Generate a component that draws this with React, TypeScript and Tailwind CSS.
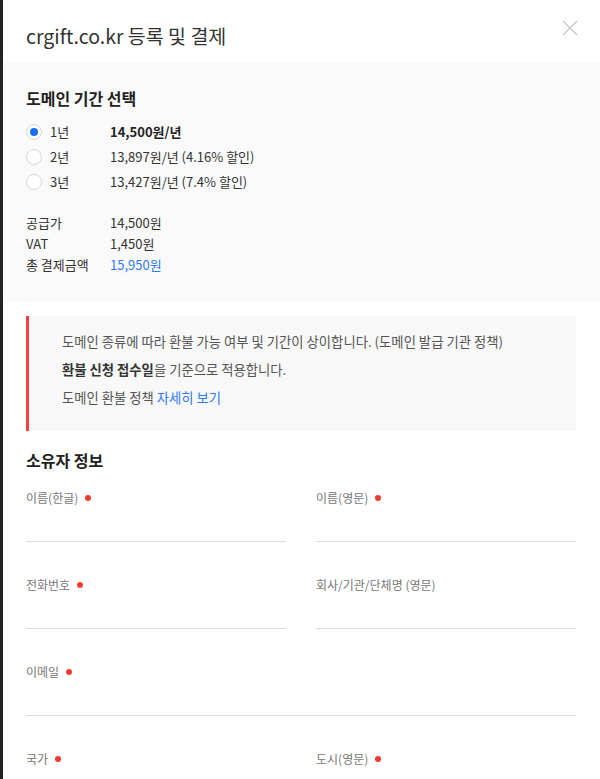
import React from 'react'

const font = { fontFamily: '"Noto Sans CJK KR", "Noto Sans", sans-serif' }

const periods = [
  { label: '1년', price: '14,500원/년', checked: true },
  { label: '2년', price: '13,897원/년 (4.16% 할인)', checked: false },
  { label: '3년', price: '13,427원/년 (7.4% 할인)', checked: false },
]

const Field = ({ label, required }: { label: string; required?: boolean }) => (
  <div className="flex flex-col mb-[33px]">
    <div className="flex items-center h-5 text-[12px] text-[#777]">
      <span>{label}</span>
      {required && <span className="ml-[7px] w-[6px] h-[6px] rounded-full bg-[#f43a32]" />}
    </div>
    <input className="h-[34px] border-b border-[#dddddd] outline-none text-[13px]" />
  </div>
)

const App = () => {
  return (
    <div className="flex w-[600px] min-h-[779px] bg-[#1f1f1f]" style={font}>
      <div className="w-[3px] shrink-0 bg-[#232323]" />
      <div className="flex-1 bg-white flex flex-col">
        <div className="relative h-[62px] pl-[23px] pt-[24px]">
          <h1 className="text-[19.5px] leading-6 text-[#333]">crgift.co.kr 등록 및 결제</h1>
          <button className="absolute right-[22px] top-[20px] w-4 h-4 text-[#c4c4c4]">
            <svg viewBox="0 0 16 16" width="16" height="16" fill="none" stroke="currentColor" strokeWidth="1.2">
              <path d="M1 1L15 15M15 1L1 15" />
            </svg>
          </button>
        </div>

        <section className="bg-[#fafafa] pl-[23px] pt-[26px] pb-[27px]">
          <h2 className="text-[16px] leading-5 font-bold text-[#222] mb-[11px]">도메인 기간 선택</h2>
          <div className="flex flex-col">
            {periods.map((p) => (
              <label key={p.label} className="flex items-center h-[25px] text-[13px] text-[#333]">
                <span className="w-4 h-4 rounded-full border border-[#d6d6d6] bg-white flex items-center justify-center">
                  {p.checked && <span className="w-2 h-2 rounded-full bg-[#1a6ef5]" />}
                </span>
                <span className="w-[68px] pl-[8px]">{p.label}</span>
                <span className={p.checked ? 'font-bold text-[#222]' : ''}>{p.price}</span>
              </label>
            ))}
          </div>
          <div className="mt-[18px] flex flex-col text-[13px] text-[#333]">
            <div className="flex h-[21px] items-center"><span className="w-[84px]">공급가</span><span>14,500원</span></div>
            <div className="flex h-[21px] items-center"><span className="w-[84px]">VAT</span><span>1,450원</span></div>
            <div className="flex h-[22px] items-center"><span className="w-[84px]">총 결제금액</span><span className="text-[#2f7cf6]">15,950원</span></div>
          </div>
        </section>

        <div className="pl-[23px] pr-[24px] pt-[13px]">
          <div className="border-l-[3px] border-[#f5403f] bg-[#f8f8f8] pl-[33px] pt-[12px] pb-[19px] text-[13.33px] leading-[28px] text-[#555]">
            <p>도메인 종류에 따라 환불 가능 여부 및 기간이 상이합니다. (도메인 발급 기관 정책)</p>
            <p><b className="text-[#333]">환불 신청 접수일</b>을 기준으로 적용합니다.</p>
            <p>도메인 환불 정책 <a className="text-[#2f7cf6]">자세히 보기</a></p>
          </div>

          <h2 className="mt-[19px] mb-[18px] text-[16px] leading-5 font-bold text-[#222]">소유자 정보</h2>

          <div className="grid grid-cols-2 gap-x-[30px]">
            <Field label="이름(한글)" required />
            <Field label="이름(영문)" required />
            <Field label="전화번호" required />
            <Field label="회사/기관/단체명 (영문)" />
          </div>
          <Field label="이메일" required />
          <div className="grid grid-cols-2 gap-x-[30px]">
            <Field label="국가" required />
            <Field label="도시(영문)" required />
          </div>
        </div>
      </div>
    </div>
  )
}

export default App
